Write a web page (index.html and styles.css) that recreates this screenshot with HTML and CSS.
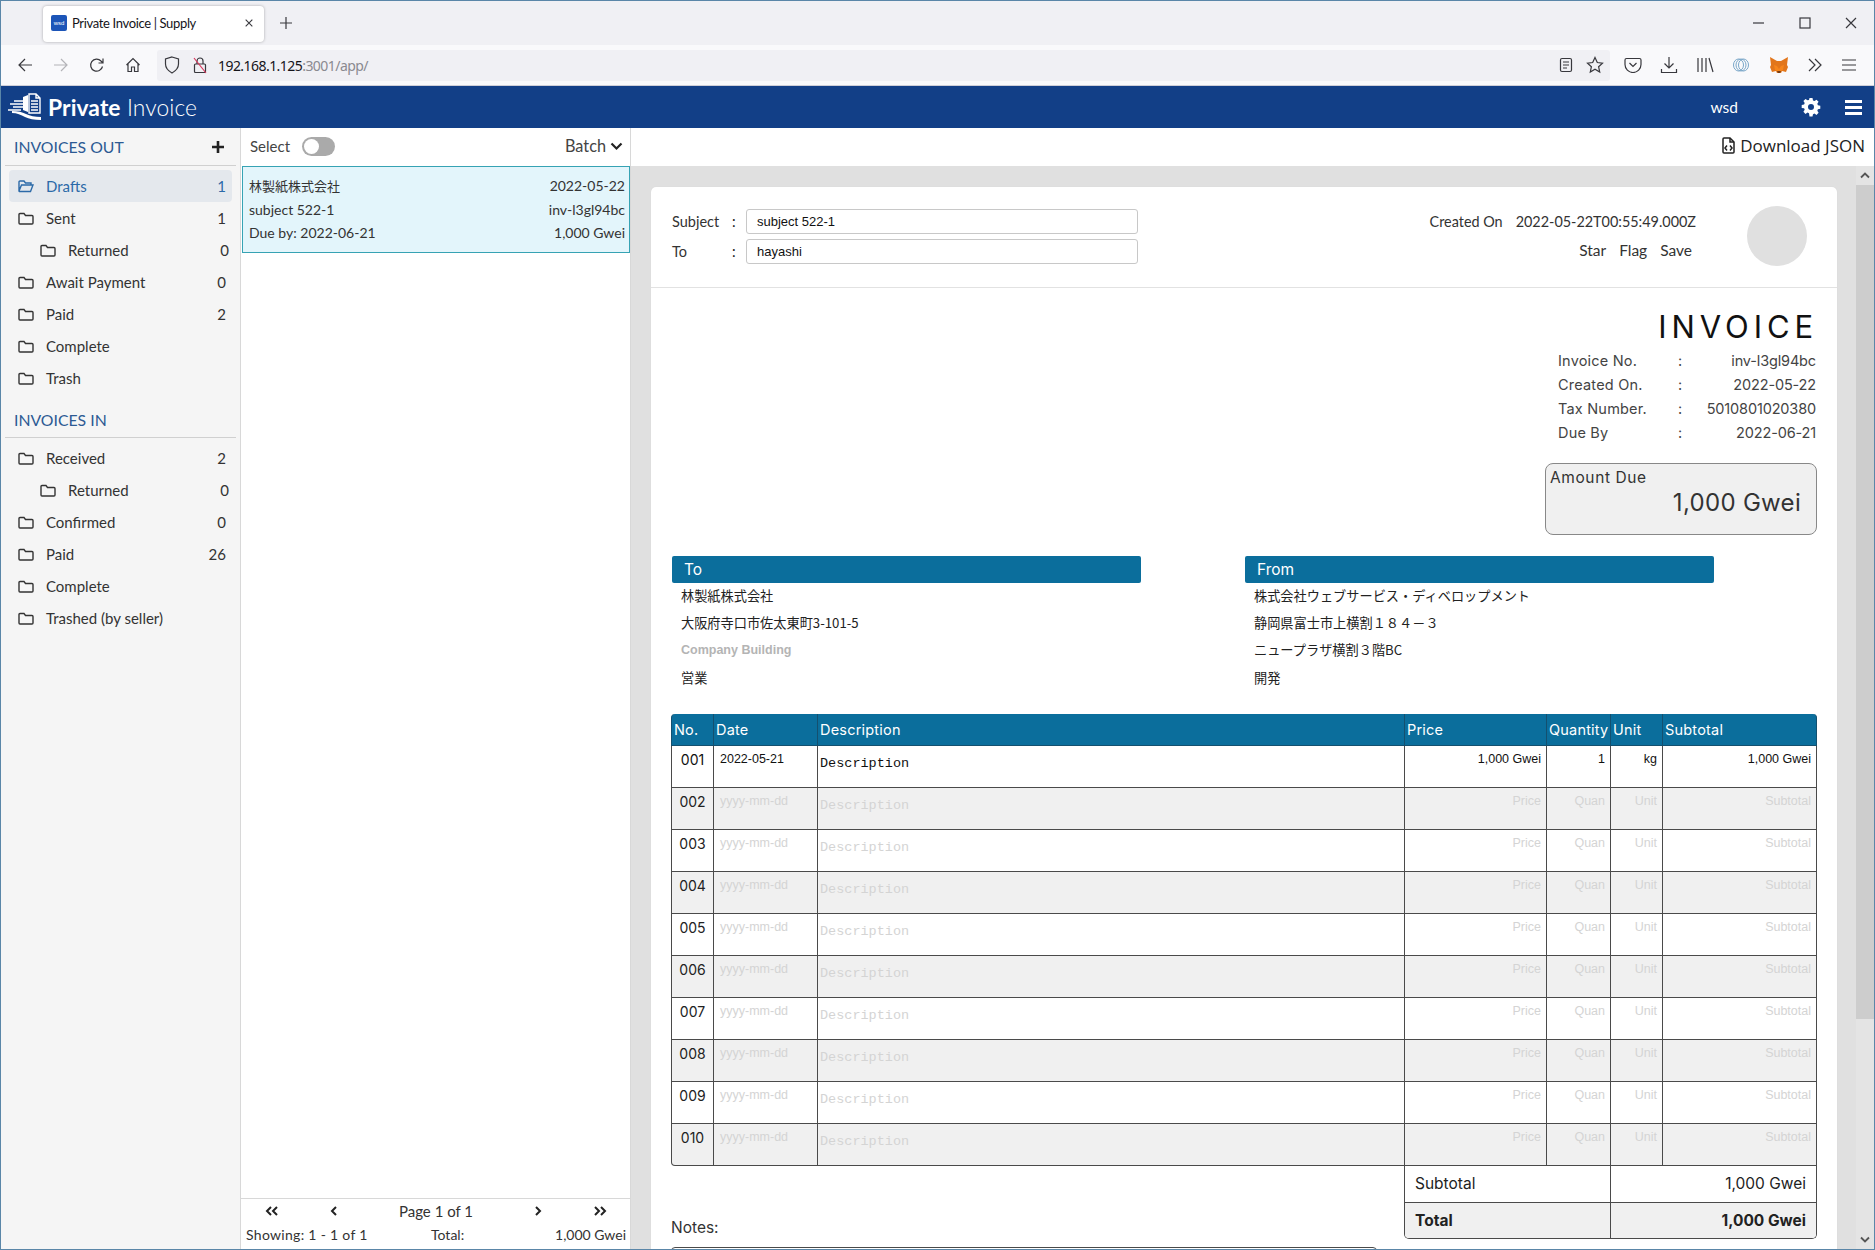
FILE: index.html
```html
<!DOCTYPE html>
<html lang="en">
<head>
<meta charset="utf-8">
<title>Private Invoice | Supply</title>
<link rel="stylesheet" href="styles.css">
</head>
<body>
<div class="window">
  <div class="tabbar">
    <div class="tab">
      <span class="favicon">wsd</span>
      <span class="tab-title">Private Invoice | Supply</span>
      <svg class="ico tab-close" width="12" height="12" viewBox="0 0 12 12"><path d="M2 2l8 8M10 2l-8 8"/></svg>
    </div>
    <svg class="ico tab-plus" width="14" height="14" viewBox="0 0 14 14"><path d="M7 1v12M1 7h12"/></svg>
    <div class="win-controls">
      <svg class="ico" width="12" height="12" viewBox="0 0 12 12"><path d="M0 6h11"/></svg>
      <svg class="ico" width="12" height="12" viewBox="0 0 12 12"><rect x="1" y="1" width="10" height="10"/></svg>
      <svg class="ico" width="12" height="12" viewBox="0 0 12 12"><path d="M1 1l10 10M11 1L1 11"/></svg>
    </div>
  </div>
  <div class="toolbar">
    <div class="nav-btns">
      <svg class="ico" width="16" height="16" viewBox="0 0 16 16"><path d="M15 8H2M8 2L2 8l6 6"/></svg>
      <svg class="ico muted" width="16" height="16" viewBox="0 0 16 16"><path d="M1 8h13M8 2l6 6-6 6"/></svg>
      <svg class="ico" width="16" height="16" viewBox="0 0 16 16"><path d="M13.5 9.5A6 6 0 1 1 12 4l1.500 1.500M14 1.500V6H9.500"/></svg>
      <svg class="ico" width="16" height="16" viewBox="0 0 16 16"><path d="M1.500 8L8 1.500 14.500 8M3 7v7.500h3.500V10h3v4.500H13V7"/></svg>
    </div>
    <div class="urlbar">
      <svg class="ico" width="16" height="18" viewBox="0 0 16 18"><path d="M8 1l6.500 2v5c0 4.500-3 7-6.500 9-3.500-2-6.500-4.500-6.500-9V3z"/></svg>
      <svg class="ico" width="14" height="18" viewBox="0 0 14 18"><rect x="1.500" y="8" width="11" height="8.500" rx="1"/><path d="M4 8V5a3 3 0 0 1 6 0v3"/><path class="lock-slash" d="M1 2l12 15"/></svg>
      <span class="url"><span class="url-host">192.168.1.125</span>:3001/app/</span>
      <span class="url-fill"></span>
      <svg class="ico" width="14" height="16" viewBox="0 0 14 16"><rect x="1.500" y="1.500" width="11" height="13" rx="1.500"/><path d="M4 5h6M4 8h6M4 11h4"/></svg>
      <svg class="ico" width="18" height="18" viewBox="0 0 18 18"><path d="M9 1.500l2.300 5 5.200.6-3.900 3.600 1.100 5.300L9 13.300 4.300 16l1.100-5.300L1.500 7.100l5.200-.6z"/></svg>
    </div>
    <div class="tool-btns">
      <svg class="ico" width="18" height="16" viewBox="0 0 18 16"><path d="M2.500 1.500h13A1.500 1.500 0 0 1 17 3v4.500a8 8 0 0 1-16 0V3a1.500 1.500 0 0 1 1.500-1.500z"/><path d="M5.500 6L9 9.500 12.500 6"/></svg>
      <svg class="ico" width="18" height="18" viewBox="0 0 18 18"><path d="M9 1v11M4.500 7.500L9 12l4.500-4.500M1.500 13v3.500h15V13"/></svg>
      <svg class="ico" width="18" height="16" viewBox="0 0 18 16"><path d="M2 1v14M6 1v14M10 1v14M13 1l4 14"/></svg>
      <svg class="ico ring" width="18" height="16" viewBox="0 0 18 16"><ellipse cx="6.500" cy="8" rx="5" ry="6"/><ellipse cx="9" cy="8" rx="5" ry="6"/><ellipse cx="11.500" cy="8" rx="5" ry="6"/></svg>
      <svg width="20" height="18" viewBox="0 0 20 18"><path fill="#e2761b" d="M1 1l7 4h4l7-4-1 8 1 2-2 5-4-1-1 2H8l-1-2-4 1-2-5 1-2z"/><path fill="#f6851b" d="M5 9l3 1 2 3 2-3 3-1-1 5-2 1H8l-2-1z"/><path fill="#763d16" d="M8 15h4l-1 2H9z"/></svg>
      <svg class="ico" width="16" height="14" viewBox="0 0 16 14"><path d="M2 1l6 6-6 6M8 1l6 6-6 6"/></svg>
      <svg class="ico" width="16" height="14" viewBox="0 0 16 14"><path d="M1 2h14M1 7h14M1 12h14"/></svg>
    </div>
  </div>

  <header class="appbar">
    <div class="brand">
      <svg class="brand-logo" width="35" height="30" viewBox="0 0 35 30"><path class="logo-fill" d="M17 5l5-2v17l-5-2zM6 19c6 0 10 1 14 3s9 3 15 3v3c-7 0-12-1-16-3s-8-4-13-4z"/><path class="logo-line" d="M23 2h7l4 4v15H23zM30 2v4h4M25 9h7M25 12h7M25 15h7M25 18h7M8 9h9M4 12h13M7 15h10M2 18h13"/></svg>
      <span class="brand-name"><b>Private</b> Invoice</span>
    </div>
    <span class="user">wsd</span>
    <svg class="gear" width="18" height="18" viewBox="0 0 18 18"><path fill-rule="evenodd" d="M7.500 0h3l.5 2.400 1.500.6 2-1.300 2.100 2.100-1.300 2 .6 1.500 2.400.5v3l-2.400.5-.6 1.500 1.300 2-2.100 2.100-2-1.300-1.500.6-.5 2.400h-3L7 15.200l-1.500-.6-2 1.300-2.100-2.100 1.300-2-.6-1.500L-.3 10V7l2.400-.5.6-1.500-1.300-2 2.100-2.100 2 1.300L7 1.900zM9 6a3 3 0 1 0 0 6 3 3 0 0 0 0-6z"/></svg>
    <svg class="burger" width="17" height="15" viewBox="0 0 17 15"><path d="M0 1.500h17M0 7.500h17M0 13.500h17"/></svg>
  </header>

  <div class="workspace">
    <aside class="sidebar">
      <div class="side-head">
        <span>INVOICES OUT</span>
        <svg class="plus" width="14" height="14" viewBox="0 0 14 14"><path d="M7 1v12M1 7h12"/></svg>
      </div>
      <ul class="folders">
        <li class="folder active"><svg class="fi" viewBox="0 0 16 13"><path d="M1 11V2a1 1 0 0 1 1-1h4l1.500 2H13v2M1 11l2.500-6H15l-2.500 6.500H1.500z"/></svg><span class="fname">Drafts</span><span class="fcount">1</span></li>
        <li class="folder"><svg class="fi" viewBox="0 0 16 13"><path d="M1 2.500a1 1 0 0 1 1-1h4l1.500 2H14a1 1 0 0 1 1 1v6.500a1 1 0 0 1-1 1H2a1 1 0 0 1-1-1z"/></svg><span class="fname">Sent</span><span class="fcount">1</span></li>
        <li class="folder sub"><svg class="fi" viewBox="0 0 16 13"><path d="M1 2.500a1 1 0 0 1 1-1h4l1.500 2H14a1 1 0 0 1 1 1v6.500a1 1 0 0 1-1 1H2a1 1 0 0 1-1-1z"/></svg><span class="fname">Returned</span><span class="fcount">0</span></li>
        <li class="folder"><svg class="fi" viewBox="0 0 16 13"><path d="M1 2.500a1 1 0 0 1 1-1h4l1.500 2H14a1 1 0 0 1 1 1v6.500a1 1 0 0 1-1 1H2a1 1 0 0 1-1-1z"/></svg><span class="fname">Await Payment</span><span class="fcount">0</span></li>
        <li class="folder"><svg class="fi" viewBox="0 0 16 13"><path d="M1 2.500a1 1 0 0 1 1-1h4l1.500 2H14a1 1 0 0 1 1 1v6.500a1 1 0 0 1-1 1H2a1 1 0 0 1-1-1z"/></svg><span class="fname">Paid</span><span class="fcount">2</span></li>
        <li class="folder"><svg class="fi" viewBox="0 0 16 13"><path d="M1 2.500a1 1 0 0 1 1-1h4l1.500 2H14a1 1 0 0 1 1 1v6.500a1 1 0 0 1-1 1H2a1 1 0 0 1-1-1z"/></svg><span class="fname">Complete</span></li>
        <li class="folder"><svg class="fi" viewBox="0 0 16 13"><path d="M1 2.500a1 1 0 0 1 1-1h4l1.500 2H14a1 1 0 0 1 1 1v6.500a1 1 0 0 1-1 1H2a1 1 0 0 1-1-1z"/></svg><span class="fname">Trash</span></li>
      </ul>
      <div class="side-head second"><span>INVOICES IN</span></div>
      <ul class="folders">
        <li class="folder"><svg class="fi" viewBox="0 0 16 13"><path d="M1 2.500a1 1 0 0 1 1-1h4l1.500 2H14a1 1 0 0 1 1 1v6.500a1 1 0 0 1-1 1H2a1 1 0 0 1-1-1z"/></svg><span class="fname">Received</span><span class="fcount">2</span></li>
        <li class="folder sub"><svg class="fi" viewBox="0 0 16 13"><path d="M1 2.500a1 1 0 0 1 1-1h4l1.500 2H14a1 1 0 0 1 1 1v6.500a1 1 0 0 1-1 1H2a1 1 0 0 1-1-1z"/></svg><span class="fname">Returned</span><span class="fcount">0</span></li>
        <li class="folder"><svg class="fi" viewBox="0 0 16 13"><path d="M1 2.500a1 1 0 0 1 1-1h4l1.500 2H14a1 1 0 0 1 1 1v6.500a1 1 0 0 1-1 1H2a1 1 0 0 1-1-1z"/></svg><span class="fname">Confirmed</span><span class="fcount">0</span></li>
        <li class="folder"><svg class="fi" viewBox="0 0 16 13"><path d="M1 2.500a1 1 0 0 1 1-1h4l1.500 2H14a1 1 0 0 1 1 1v6.500a1 1 0 0 1-1 1H2a1 1 0 0 1-1-1z"/></svg><span class="fname">Paid</span><span class="fcount">26</span></li>
        <li class="folder"><svg class="fi" viewBox="0 0 16 13"><path d="M1 2.500a1 1 0 0 1 1-1h4l1.500 2H14a1 1 0 0 1 1 1v6.500a1 1 0 0 1-1 1H2a1 1 0 0 1-1-1z"/></svg><span class="fname">Complete</span></li>
        <li class="folder"><svg class="fi" viewBox="0 0 16 13"><path d="M1 2.500a1 1 0 0 1 1-1h4l1.500 2H14a1 1 0 0 1 1 1v6.500a1 1 0 0 1-1 1H2a1 1 0 0 1-1-1z"/></svg><span class="fname">Trashed (by seller)</span></li>
      </ul>
    </aside>

    <section class="listpane">
      <div class="list-top">
        <span>Select</span>
        <span class="toggle"><span class="knob"></span></span>
        <span class="batch">Batch</span>
        <svg class="chev" width="13" height="9" viewBox="0 0 13 9"><path d="M1.500 1.500l5 5 5-5"/></svg>
      </div>
      <div class="list-item">
        <div class="li-row"><span class="cjk">林製紙株式会社</span><span>2022-05-22</span></div>
        <div class="li-row"><span>subject 522-1</span><span>inv-l3gl94bc</span></div>
        <div class="li-row"><span>Due by: 2022-06-21</span><span>1,000 Gwei</span></div>
      </div>
      <div class="list-foot">
        <div class="pager">
          <svg class="pg" width="14" height="10" viewBox="0 0 14 10"><path d="M6 1L2 5l4 4M12 1L8 5l4 4"/></svg>
          <svg class="pg" width="8" height="10" viewBox="0 0 8 10"><path d="M6 1L2 5l4 4"/></svg>
          <span>Page 1 of 1</span>
          <svg class="pg" width="8" height="10" viewBox="0 0 8 10"><path d="M2 1l4 4-4 4"/></svg>
          <svg class="pg" width="14" height="10" viewBox="0 0 14 10"><path d="M2 1l4 4-4 4M8 1l4 4-4 4"/></svg>
        </div>
        <div class="summary"><span class="sum-show">Showing: 1 - 1 of 1</span><span class="sum-total">Total:</span><span class="sum-val">1,000 Gwei</span></div>
      </div>
    </section>

    <main class="detail">
      <div class="detail-top">
        <svg class="dl-ico" width="13" height="17" viewBox="0 0 13 17"><path d="M1 2a1 1 0 0 1 1-1h6l4 4v10a1 1 0 0 1-1 1H2a1 1 0 0 1-1-1z"/><path d="M8 1v4h4M5 8.500L3 11l2 2.500M8 8.500l2 2.500-2 2.500"/></svg>
        <span>Download JSON</span>
      </div>
      <div class="detail-body">
        <div class="canvas">
          <article class="card">
            <div class="card-head">
              <div class="fields">
                <div class="field"><span class="f-label">Subject</span><span class="f-colon">:</span><span class="f-input">subject 522-1</span></div>
                <div class="field"><span class="f-label">To</span><span class="f-colon">:</span><span class="f-input">hayashi</span></div>
              </div>
              <div class="head-meta">
                <div class="created"><span>Created On</span><span>2022-05-22T00:55:49.000Z</span></div>
                <div class="actions"><span>Star</span><span>Flag</span><span>Save</span></div>
              </div>
              <div class="avatar"></div>
            </div>
            <div class="doc">
              <div class="doc-right">
                <h1 class="doc-title">INVOICE</h1>
                <dl class="meta">
                  <div class="meta-row"><dt>Invoice No.</dt><dd class="meta-c">:</dd><dd class="meta-v">inv-l3gl94bc</dd></div>
                  <div class="meta-row"><dt>Created On.</dt><dd class="meta-c">:</dd><dd class="meta-v">2022-05-22</dd></div>
                  <div class="meta-row"><dt>Tax Number.</dt><dd class="meta-c">:</dd><dd class="meta-v">5010801020380</dd></div>
                  <div class="meta-row"><dt>Due By</dt><dd class="meta-c">:</dd><dd class="meta-v">2022-06-21</dd></div>
                </dl>
                <div class="amount">
                  <div class="amount-l">Amount Due</div>
                  <div class="amount-v">1,000 Gwei</div>
                </div>
              </div>
              <div class="parties">
                <div class="party">
                  <div class="party-h">To</div>
                  <p>林製紙株式会社</p>
                  <p>大阪府寺口市佐太東町3-101-5</p>
                  <p class="ph">Company Building</p>
                  <p>営業</p>
                </div>
                <div class="party">
                  <div class="party-h">From</div>
                  <p>株式会社ウェブサービス・ディベロップメント</p>
                  <p>静岡県富士市上横割１８４－３</p>
                  <p>ニュープラザ横割３階BC</p>
                  <p>開発</p>
                </div>
              </div>
              <table class="items">
                <colgroup><col class="c-no"><col class="c-date"><col class="c-desc"><col class="c-price"><col class="c-qty"><col class="c-unit"><col class="c-sub"></colgroup>
                <thead><tr><th>No.</th><th>Date</th><th>Description</th><th>Price</th><th>Quantity</th><th>Unit</th><th>Subtotal</th></tr></thead>
                <tbody>
                  <tr class="filled"><td class="no">001</td><td class="date">2022-05-21</td><td class="desc">Description</td><td class="num">1,000 Gwei</td><td class="num">1</td><td class="num">kg</td><td class="num">1,000 Gwei</td></tr>
                  <tr><td class="no">002</td><td class="date">yyyy-mm-dd</td><td class="desc">Description</td><td class="num">Price</td><td class="num">Quan</td><td class="num">Unit</td><td class="num">Subtotal</td></tr>
                  <tr><td class="no">003</td><td class="date">yyyy-mm-dd</td><td class="desc">Description</td><td class="num">Price</td><td class="num">Quan</td><td class="num">Unit</td><td class="num">Subtotal</td></tr>
                  <tr><td class="no">004</td><td class="date">yyyy-mm-dd</td><td class="desc">Description</td><td class="num">Price</td><td class="num">Quan</td><td class="num">Unit</td><td class="num">Subtotal</td></tr>
                  <tr><td class="no">005</td><td class="date">yyyy-mm-dd</td><td class="desc">Description</td><td class="num">Price</td><td class="num">Quan</td><td class="num">Unit</td><td class="num">Subtotal</td></tr>
                  <tr><td class="no">006</td><td class="date">yyyy-mm-dd</td><td class="desc">Description</td><td class="num">Price</td><td class="num">Quan</td><td class="num">Unit</td><td class="num">Subtotal</td></tr>
                  <tr><td class="no">007</td><td class="date">yyyy-mm-dd</td><td class="desc">Description</td><td class="num">Price</td><td class="num">Quan</td><td class="num">Unit</td><td class="num">Subtotal</td></tr>
                  <tr><td class="no">008</td><td class="date">yyyy-mm-dd</td><td class="desc">Description</td><td class="num">Price</td><td class="num">Quan</td><td class="num">Unit</td><td class="num">Subtotal</td></tr>
                  <tr><td class="no">009</td><td class="date">yyyy-mm-dd</td><td class="desc">Description</td><td class="num">Price</td><td class="num">Quan</td><td class="num">Unit</td><td class="num">Subtotal</td></tr>
                  <tr><td class="no">010</td><td class="date">yyyy-mm-dd</td><td class="desc">Description</td><td class="num">Price</td><td class="num">Quan</td><td class="num">Unit</td><td class="num">Subtotal</td></tr>
                </tbody>
              </table>
              <div class="below">
                <div class="notes">
                  <div class="notes-l">Notes:</div>
                  <div class="notes-box"></div>
                </div>
                <div class="totals">
                  <div class="tot-row"><span>Subtotal</span><span>1,000 Gwei</span></div>
                  <div class="tot-row grand"><span>Total</span><span>1,000 Gwei</span></div>
                </div>
              </div>
            </div>
          </article>
        </div>
        <div class="scrollbar">
          <svg class="sb-arrow" width="10" height="7" viewBox="0 0 10 7"><path d="M1 5.500l4-4 4 4"/></svg>
          <div class="sb-track"><div class="sb-thumb"></div></div>
          <svg class="sb-arrow" width="10" height="7" viewBox="0 0 10 7"><path d="M1 1.500l4 4 4-4"/></svg>
        </div>
      </div>
    </main>
  </div>
</div>
</body>
</html>
```
FILE: styles.css
```css
* { box-sizing: border-box; }
html, body { margin: 0; height: 100%; overflow: hidden; }
body { font-family: "Lato", "Noto Sans CJK JP", sans-serif; color: #222; }
ul, dl, dd { margin: 0; padding: 0; list-style: none; }
p, h1 { margin: 0; }

.window { height: 1250px; display: flex; flex-direction: column; border: 1px solid #5a86a8; background: #fff; overflow: hidden; }

.ico { fill: none; stroke: #38383d; stroke-width: 1.2; flex: none; }
.ico.muted { stroke: #b4b4b8; }
.ico.ring { stroke: #7aa7c9; stroke-width: 1; }
.lock-slash { stroke: #d8365a; }

.tabbar { height: 44px; flex: none; background: #f0f0f4; display: flex; align-items: center; padding: 0 0 0 42px; }
.tab { width: 221px; height: 36px; margin-top: 2px; background: #fff; border-radius: 4px; box-shadow: 0 0 3px rgba(0,0,0,.3); display: flex; align-items: center; padding: 0 10px 2px 8px; font: 13px "Lato", sans-serif; color: #15141a; }
.favicon { width: 16px; height: 16px; background: #1c55b8; color: #fff; font: 6px/16px "Liberation Sans", sans-serif; text-align: center; border-radius: 2px; flex: none; }
.tab-title { margin-left: 5px; flex: 1; letter-spacing: -.35px; white-space: nowrap; }
.tab-close { stroke-width: 1.3; width: 10px; height: 10px; }
.tab-plus { margin-left: 15px; }
.win-controls { margin-left: auto; display: flex; gap: 34px; padding-right: 17px; }

.toolbar { height: 41px; flex: none; background: #f9f9fb; display: flex; align-items: center; border-bottom: 1px solid #cfcfd8; }
.nav-btns { display: flex; gap: 20px; width: 156px; padding-left: 16px; }
.urlbar { width: 1453px; height: 31px; background: #f0f0f4; border-radius: 3px; display: flex; align-items: center; padding: 0 6px 0 7px; font: 14px "Noto Sans", sans-serif; }
.urlbar .ico:nth-child(2) { margin-left: 13px; }
.url { margin-left: 11px; color: #8a8a90; letter-spacing: -.55px; }
.url-host { color: #15141a; }
.url-fill { flex: 1; }
.urlbar .ico:nth-last-child(1) { margin-left: 13px; }
.tool-btns { flex: 1; display: flex; align-items: center; justify-content: space-between; padding: 0 17px 0 14px; }

.appbar { height: 42px; flex: none; background: #123f87; display: flex; align-items: center; color: #fff; padding-right: 12px; }
.brand { display: flex; align-items: center; flex: 1; padding-left: 5px; }
.brand-logo { flex: none; }
.logo-fill { fill: #fff; }
.logo-line { fill: none; stroke: #fff; stroke-width: 1.4; }
.brand-name { margin-left: 7px; font: 300 22.800px "Lato", sans-serif; letter-spacing: .1px; }
.brand-name b { font-weight: 700; }
.user { font: 15.500px "Lato", sans-serif; margin-right: 64px; }
.gear { fill: #fff; margin-right: 25px; overflow: visible; }
.burger { fill: none; stroke: #fff; stroke-width: 3; }

.workspace { flex: 1; min-height: 0; display: flex; }

.sidebar { width: 240px; flex: none; background: #f5f5f5; border-right: 1px solid #d8d8d8; padding: 0 4px; font-size: 15px; color: #333; }
.side-head { height: 38px; display: flex; align-items: center; justify-content: space-between; border-bottom: 1px solid #d0d0d0; padding: 0 11px 0 9px; color: #2c5a93; font-size: 15.800px; }
.side-head.second { margin-top: 8px; height: 36px; }
.plus { fill: none; stroke: #222; stroke-width: 2.600; }
.folders { padding: 4px 4px 0 4px; }
.folder { height: 32px; display: flex; align-items: center; padding: 0 6px 0 9px; border-radius: 4px; color: #333; }
.folder.active { background: #e4e8ed; color: #2c6aa8; }
.folder.active .fi { stroke: #2c6aa8; }
.folder.sub { padding-left: 31px; padding-right: 3px; }
.fi { width: 16px; height: 13px; fill: none; stroke: #333; stroke-width: 1.400; flex: none; }
.fname { margin-left: 12px; flex: 1; white-space: nowrap; }
.fcount { text-align: right; }

.listpane { width: 390px; flex: none; display: flex; flex-direction: column; background: #fff; border-right: 1px solid #d8d8d8; font-size: 14px; color: #333; }
.list-top { height: 38px; flex: none; display: flex; align-items: center; padding: 0 7px 2px 9px; font-size: 15px; color: #444; }
.toggle { margin-left: 12px; width: 33px; height: 19px; border-radius: 10px; background: #aaa; padding: 2px; }
.knob { display: block; width: 15px; height: 15px; border-radius: 50%; background: #fff; }
.batch { margin-left: auto; margin-right: 4px; margin-bottom: 2px; font-size: 16.300px; }
.chev { fill: none; stroke: #222; stroke-width: 2.200; }
.list-item { height: 87px; flex: none; background: #e3f5fb; border: 1px solid #36a3b4; margin: 0 0 0 1px; padding: 7px 4px 0 6px; }
.li-row { height: 23.500px; display: flex; justify-content: space-between; align-items: center; white-space: nowrap; }
.cjk { font-family: "Noto Sans CJK JP", sans-serif; font-size: 13px; }
.list-foot { margin-top: auto; height: 51px; flex: none; border-top: 1px solid #d8d8d8; }
.pager { height: 24px; display: grid; grid-template-columns: 62px 62px 142px 62px 62px; justify-items: center; align-items: center; font-size: 15px; }
.pg { fill: none; stroke: #222; stroke-width: 2; }
.summary { display: flex; height: 23px; align-items: center; white-space: nowrap; padding: 0 4px 0 5px; }
.sum-show { width: 185px; letter-spacing: .3px; }
.sum-val { margin-left: auto; }

.detail { flex: 1; min-width: 0; display: flex; flex-direction: column; }
.detail-top { height: 38px; flex: none; display: flex; align-items: center; justify-content: flex-end; padding: 0 9px 4px 0; font: 17px "Open Sans", sans-serif; color: #222; gap: 5px; background: #fff; }
.dl-ico { fill: none; stroke: #222; stroke-width: 1.500; }
.detail-body { flex: 1; min-height: 0; display: flex; background: #e0e0e0; }
.canvas { flex: 1; min-width: 0; overflow: hidden; padding: 21px 19px 0 20px; }
.scrollbar { width: 18px; flex: none; background: #e4e4e4; display: flex; flex-direction: column; align-items: center; }
.sb-arrow { flex: none; margin: 6px 0; fill: none; stroke: #555; stroke-width: 1.800; }
.sb-track { flex: 1; width: 100%; }
.sb-thumb { height: 834px; background: #cdcdcd; }

.card { background: #fff; border-radius: 5px 5px 0 0; box-shadow: 0 0 1px rgba(0,0,0,.1); }
.card-head { height: 101px; display: flex; border-bottom: 1px solid #e2e2e2; padding: 22px 21px 0 21px; font-size: 14.500px; }
.fields { width: 466px; flex: none; display: flex; flex-direction: column; gap: 5px; }
.field { display: flex; align-items: center; height: 25px; }
.f-label { width: 60px; color: #333; }
.f-colon { width: 14px; }
.f-input { width: 392px; height: 25px; border: 1px solid #c8c8c8; border-radius: 3px; padding-left: 10px; font: 13px/23px "Liberation Sans", sans-serif; color: #111; }
.head-meta { margin-left: auto; margin-right: 51px; }
.created { display: flex; gap: 13px; height: 24px; align-items: center; font-size: 14.400px; color: #333; }
.actions { display: flex; justify-content: flex-end; gap: 13px; margin-top: 8px; padding-right: 4px; font-size: 15.500px; color: #333; }
.avatar { width: 60px; height: 60px; border-radius: 50%; background: #e0e0e0; margin: -3px 9px 0 0; flex: none; }

.doc { padding: 20px 20px 0 20px; font-family: "Inter", "Noto Sans CJK JP", sans-serif; }
.doc-right { width: 272px; margin-left: auto; }
.doc-title { font: 400 31px/38px "Inter", sans-serif; letter-spacing: 4.900px; text-align: right; color: #111; margin-right: -1px; }
.meta { margin-top: 2px; font-size: 14.500px; color: #444; }
.meta-row { height: 24.200px; display: flex; align-items: center; padding: 0 1px 0 13px; }
.meta-row dt { width: 120px; letter-spacing: .2px; white-space: nowrap; }
.meta-c { width: 20px; }
.meta-v { flex: 1; text-align: right; letter-spacing: -.15px; white-space: nowrap; }
.amount { height: 72px; margin-top: 18px; border: 1px solid #888; border-radius: 8px; background: #f0f0f0; padding: 3px 15px 0 4px; }
.amount-l { font-size: 15.500px; color: #333; line-height: 22px; letter-spacing: .6px; }
.amount-v { font-size: 24px; line-height: 28px; text-align: right; color: #333; letter-spacing: .3px; }

.parties { display: flex; justify-content: space-between; margin-top: 21px; padding-right: 103px; padding-left: 1px; }
.party { width: 469px; font: 13.200px "Noto Sans CJK JP", sans-serif; color: #222; }
.party-h { height: 27px; background: #0b6e9c; border-radius: 2px; color: #fff; font: 15.500px/28px "Inter", sans-serif; padding-left: 12px; }
.party p { height: 27.300px; line-height: 25px; padding-left: 9px; white-space: nowrap; }
.party .ph { color: #b4b4b4; font: 600 12.500px/27px "Liberation Sans", sans-serif; }

.items { width: 1146px; margin-top: 22px; table-layout: fixed; border-collapse: separate; border-spacing: 0; }
.c-no { width: 43px; } .c-date { width: 104px; } .c-desc { width: 587px; } .c-price { width: 142px; } .c-qty { width: 64px; } .c-unit { width: 52px; } .c-sub { width: 154px; }
.items th { height: 32px; background: #0b6e9c; color: #fff; font-weight: 400; font-size: 14.500px; letter-spacing: .2px; text-align: left; padding: 0 0 0 2px; border-right: 1px solid #14506f; border-bottom: 1px solid #14506f; white-space: nowrap; overflow: visible; }
.items th:first-child { border-left: 1px solid #14506f; border-top-left-radius: 4px; }
.items th:last-child { border-top-right-radius: 4px; }
.items td { height: 42px; padding: 0; border-right: 1px solid #4a4a4a; border-bottom: 1px solid #4a4a4a; vertical-align: top; color: #d4d4d4; font: 12.500px/1 "Liberation Sans", sans-serif; }
.items td:first-child { border-left: 1px solid #4a4a4a; }
.items tbody tr:last-child td:first-child { border-bottom-left-radius: 4px; }
.items tbody tr:nth-child(even) td { background: #f0f0f0; }
.items td.no { color: #222; font: 14px/1 "Inter", sans-serif; text-align: center; padding-top: 7px; }
.items td.date { padding: 7px 0 0 6px; font-size: 12.500px; }
.items td.desc { padding: 11px 0 0 2px; font: 13.500px/1 "Liberation Mono", monospace; }
.items td.num { text-align: right; padding: 7px 5px 0 0; }
.items .filled td { color: #111; }

.below { display: flex; align-items: flex-start; }
.notes { width: 733px; padding-top: 51px; flex: none; }
.notes-l { font-size: 15.500px; color: #333; line-height: 22px; }
.notes-box { width: 706px; height: 60px; margin-top: 8px; border: 1px solid #4a4a4a; border-radius: 4px; }
.totals { width: 413px; border: 1px solid #4a4a4a; border-top: 0; border-radius: 0 0 5px 5px; overflow: hidden; font-size: 15.500px; color: #222; }
.tot-row { height: 36px; display: flex; background: #fff; line-height: 36px; }
.tot-row span:first-child { width: 206px; padding-left: 10px; border-right: 1px solid #4a4a4a; }
.tot-row span:last-child { flex: 1; padding-right: 10px; text-align: right; }
.tot-row.grand { background: #f0f0f0; font-weight: 700; border-top: 1px solid #4a4a4a; }
```
